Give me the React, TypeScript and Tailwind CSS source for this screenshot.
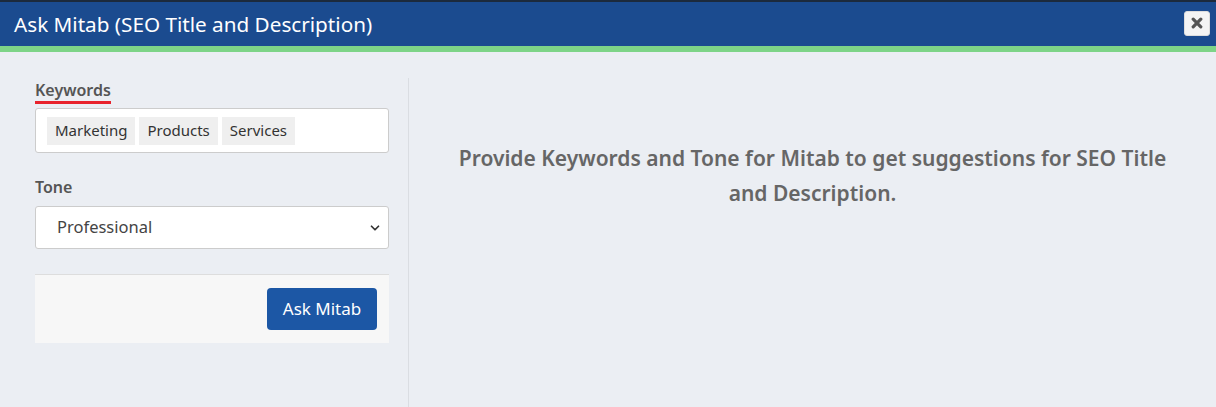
import { ChevronDown } from 'lucide-react';

const font = { fontFamily: '"Noto Sans", "Open Sans", sans-serif' };

export default function App() {
  const tags = ['Marketing', 'Products', 'Services'];

  return (
    <div className="w-[1216px] h-[407px] bg-[#ebeef3] flex flex-col overflow-hidden" style={font}>
      {/* Header */}
      <div className="border-t-2 border-[#1c2a3c] bg-[#1b4b8f] h-[46px] flex items-center justify-between pl-[14px] pr-[6px]">
        <h1 className="text-white text-[20.7px] leading-none">Ask Mitab (SEO Title and Description)</h1>
        <button className="w-[26px] h-[25px] bg-[#f4f4f4] border border-[#ddd] rounded-[3px] flex items-center justify-center mt-[-2px]">
          <svg width="12" height="12" viewBox="0 0 12 12">
            <path d="M2.2 2.2 L9.8 9.8 M9.8 2.2 L2.2 9.8" stroke="#555" strokeWidth="3.2" strokeLinecap="round" />
          </svg>
        </button>
      </div>
      <div className="h-[6px] bg-[#7dd487]" />

      {/* Body */}
      <div className="flex flex-1">
        <div className="w-[409px] pl-[35px] pr-[19px] mt-[26px] border-r border-[#dadde2]">
          <label className="inline-block text-[#555] text-[16px] font-semibold leading-[22px] border-b-[3px] border-[#e8232c]">
            Keywords
          </label>
          <div className="mt-[4px] h-[45px] bg-white border border-[#ccc] rounded-[3px] flex items-center gap-[4px] pl-[11px]">
            {tags.map((t) => (
              <span key={t} className="bg-[#efefef] text-[#333] text-[15px] h-[28px] px-[8px] flex items-center">
                {t}
              </span>
            ))}
          </div>

          <label className="block mt-[23px] text-[#555] text-[16px] font-semibold leading-[22px]">Tone</label>
          <div className="mt-[8px] h-[43px] bg-white border border-[#ccc] rounded-[3px] flex items-center justify-between pl-[21px] pr-[6px]">
            <span className="text-[#444] text-[16.5px]">Professional</span>
            <ChevronDown size={14} strokeWidth={3} className="text-[#333]" />
          </div>

          <div className="mt-[25px] h-[69px] bg-[#f7f7f7] border-t border-[#ddd] flex items-center justify-end pr-[12px]">
            <button className="bg-[#1c57a5] text-white text-[17px] w-[110px] h-[42px] rounded-[4px]">
              Ask Mitab
            </button>
          </div>
        </div>

        <div className="flex-1 pt-[89px] px-[40px]">
          <p className="text-center text-[#666] text-[21px] font-semibold leading-[35px]">
            Provide Keywords and Tone for Mitab to get suggestions for SEO Title and Description.
          </p>
        </div>
      </div>
    </div>
  );
}
